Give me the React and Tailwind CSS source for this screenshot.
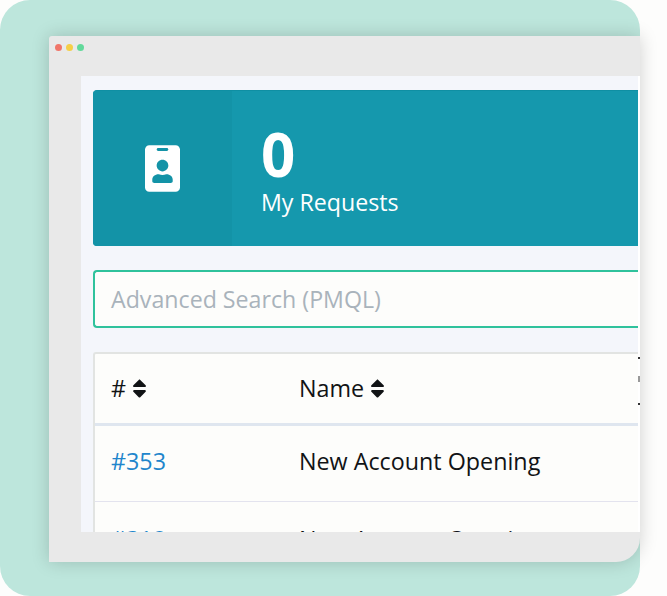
import React from "react";
import { FaIdBadge, FaSort } from "react-icons/fa";

export default function App() {
  return (
    <div className="w-[667px] h-[596px] bg-[#fdfdfc] overflow-hidden font-['Open_Sans',sans-serif]">
      <div className="w-[640px] h-[596px] bg-[#bde6dc] rounded-[30px] pt-[36px] pl-[49px] pb-[34px] flex">
        <div className="w-[591px] h-[526px] bg-[#e9e9e9] rounded-tl-[3px] rounded-br-[24px] shadow-[0_0_18px_rgba(0,0,0,0.18)] flex flex-col">
          <div className="h-[40px] shrink-0 flex items-start gap-[4px] pl-[6px] pt-[8px]">
            <span className="w-[7px] h-[7px] rounded-full bg-[#f0766a]" />
            <span className="w-[7px] h-[7px] rounded-full bg-[#f5cf47]" />
            <span className="w-[7px] h-[7px] rounded-full bg-[#62d99b]" />
          </div>
          <div className="ml-[32px] h-[456px] w-[559px] bg-white overflow-hidden">
            <div className="w-[557px] h-[456px] bg-[#f4f6fb] pl-[12px] pt-[14px] flex flex-col">
              <div className="h-[156px] shrink-0 w-[545px] rounded-l-[4px] overflow-hidden flex bg-[#1598ad] border-t border-[#0f8fa3] text-white">
                <div className="w-[139px] shrink-0 bg-[#1393a7] flex items-center justify-center">
                  <FaIdBadge className="w-[35px] h-[47px]" />
                </div>
                <div className="pl-[29px] flex flex-col">
                  <div className="text-[60px] leading-[60px] font-bold mt-[33px] h-[60px]">0</div>
                  <div className="text-[23.2px] leading-[32px] mt-[2px]">My Requests</div>
                </div>
              </div>
              <div className="mt-[24px] h-[58px] shrink-0 w-[545px] bg-[#fdfdfb] border-2 border-r-0 border-[#2fc29c] rounded-l-[4px] flex items-center pl-[16px] pt-[1px] text-[23.2px] text-[#a9b3bb]">
                Advanced Search (PMQL)
              </div>
              <div className="mt-[24px] w-[545px] flex-1 min-h-0 relative bg-[#fdfdfb] border-t-2 border-l-2 border-[#e2e4e2] rounded-tl-[3px] text-[#111315] text-[23.3px]">
                <div className="h-[72px] border-b-[3px] border-[#dfe6ef] flex items-center">
                  <div className="w-[204px] pl-[16px] flex items-center gap-[6px]">
                    <span>#</span>
                    <FaSort className="w-[15px] h-[23px]" />
                  </div>
                  <div className="flex items-center gap-[6px]">
                    <span>Name</span>
                    <FaSort className="w-[15px] h-[23px]" />
                  </div>
                </div>
                <div className="h-[76px] border-b border-[#e3e3ee] flex items-center pb-[4px]">
                  <a className="w-[204px] pl-[16px] text-[#1f86cc]">#353</a>
                  <span>New Account Opening</span>
                </div>
                <div className="h-[74px] flex items-center">
                  <a className="w-[204px] pl-[16px] text-[#1f86cc]">#318</a>
                  <span>New Account Opening</span>
                </div>
                <span className="absolute left-[543px] top-[3px] w-[2px] h-[2px] bg-[#333]" />
                <span className="absolute left-[543px] top-[22px] w-[2px] h-[6px] bg-[#999]" />
                <span className="absolute left-[543px] top-[49px] w-[2px] h-[2px] bg-[#333]" />
              </div>
            </div>
          </div>
        </div>
      </div>
    </div>
  );
}
